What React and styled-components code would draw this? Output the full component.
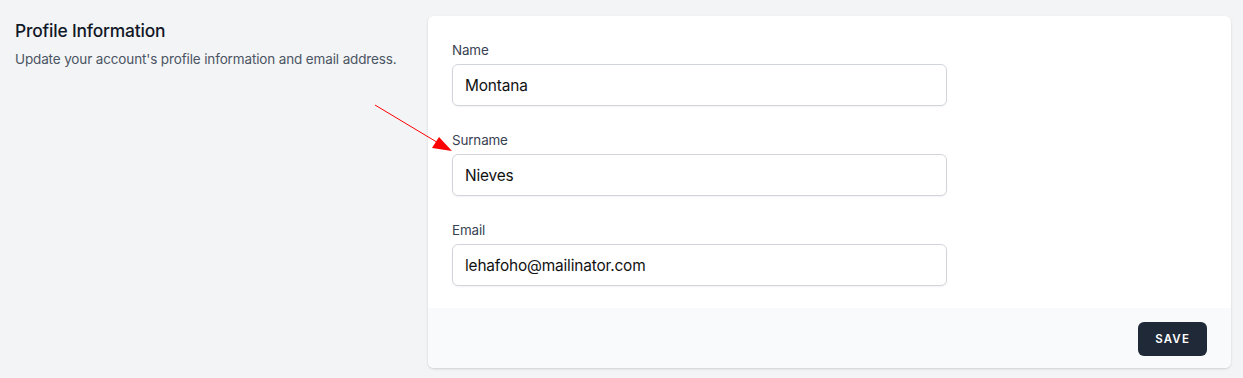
import React from "react";
import styled, { createGlobalStyle } from "styled-components";

const GlobalStyle = createGlobalStyle`
  body {
    margin: 0;
    background: #f3f4f6;
    font-family: "Inter", "Lato", sans-serif;
    -webkit-font-smoothing: antialiased;
  }
`;

function App() {
  return (
    <>
      <GlobalStyle />
      <Page>
        <Intro>
          <Title>Profile Information</Title>
          <Description>Update your account's profile information and email address.</Description>
        </Intro>
        <Card>
          <CardBody>
            <Field label="Name" value="Montana" />
            <Field label="Surname" value="Nieves" />
            <Field label="Email" value="lehafoho@mailinator.com" type="email" />
          </CardBody>
          <CardFooter>
            <Button type="button">Save</Button>
          </CardFooter>
        </Card>
        <Arrow width="90" height="56" viewBox="0 0 90 56">
          <line x1="1" y1="1" x2="66" y2="40" stroke="#ff0000" strokeWidth="1" />
          <polygon points="78,47 58,44 65,33" fill="#ff0000" />
        </Arrow>
      </Page>
    </>
  );
}

function Field({ label, value, type = "text" }) {
  return (
    <FieldWrap>
      <Label>{label}</Label>
      <Input type={type} defaultValue={value} />
    </FieldWrap>
  );
}

export default App;

const Page = styled.div`
  position: relative;
  display: grid;
  grid-template-columns: 389px 803px;
  gap: 24px;
  padding: 16px 12px 10px 15px;
`;

const Intro = styled.div`
  padding-top: 1px;
`;

const Title = styled.h3`
  margin: 0;
  font-size: 17.4px;
  line-height: 28px;
  font-weight: 500;
  letter-spacing: -0.01em;
  color: #111827;
`;

const Description = styled.p`
  margin: 4px 0 0;
  font-size: 13.5px;
  line-height: 20px;
  letter-spacing: -0.01em;
  color: #4b5563;
`;

const Card = styled.div`
  background: #fff;
  border-radius: 6px;
  box-shadow: 0 1px 3px rgba(0, 0, 0, 0.1), 0 1px 2px rgba(0, 0, 0, 0.06);
  overflow: hidden;
`;

const CardBody = styled.div`
  display: flex;
  flex-direction: column;
  gap: 24px;
  padding: 24px 24px 22px;
`;

const FieldWrap = styled.div`
  display: flex;
  flex-direction: column;
  gap: 4px;
  width: 495px;
`;

const Label = styled.label`
  font-size: 13.4px;
  line-height: 20px;
  font-weight: 400;
  letter-spacing: -0.01em;
  color: #374151;
`;

const Input = styled.input`
  box-sizing: border-box;
  height: 42px;
  padding: 8px 12px;
  border: 1px solid #d1d5db;
  border-radius: 6px;
  box-shadow: 0 1px 2px rgba(0, 0, 0, 0.05);
  font-family: inherit;
  font-size: 15.4px;
  letter-spacing: -0.01em;
  color: #111;
  outline: none;
`;

const CardFooter = styled.div`
  display: flex;
  justify-content: flex-end;
  padding: 14px 24px 12px;
  background: #f9fafb;
`;

const Button = styled.button`
  height: 34px;
  padding: 0 16px;
  border: 1px solid transparent;
  border-radius: 6px;
  background: #1f2937;
  color: #fff;
  font-family: inherit;
  font-size: 11.5px;
  font-weight: 600;
  letter-spacing: 0.1em;
  text-transform: uppercase;
`;

const Arrow = styled.svg`
  position: absolute;
  left: 374px;
  top: 104px;
`;
